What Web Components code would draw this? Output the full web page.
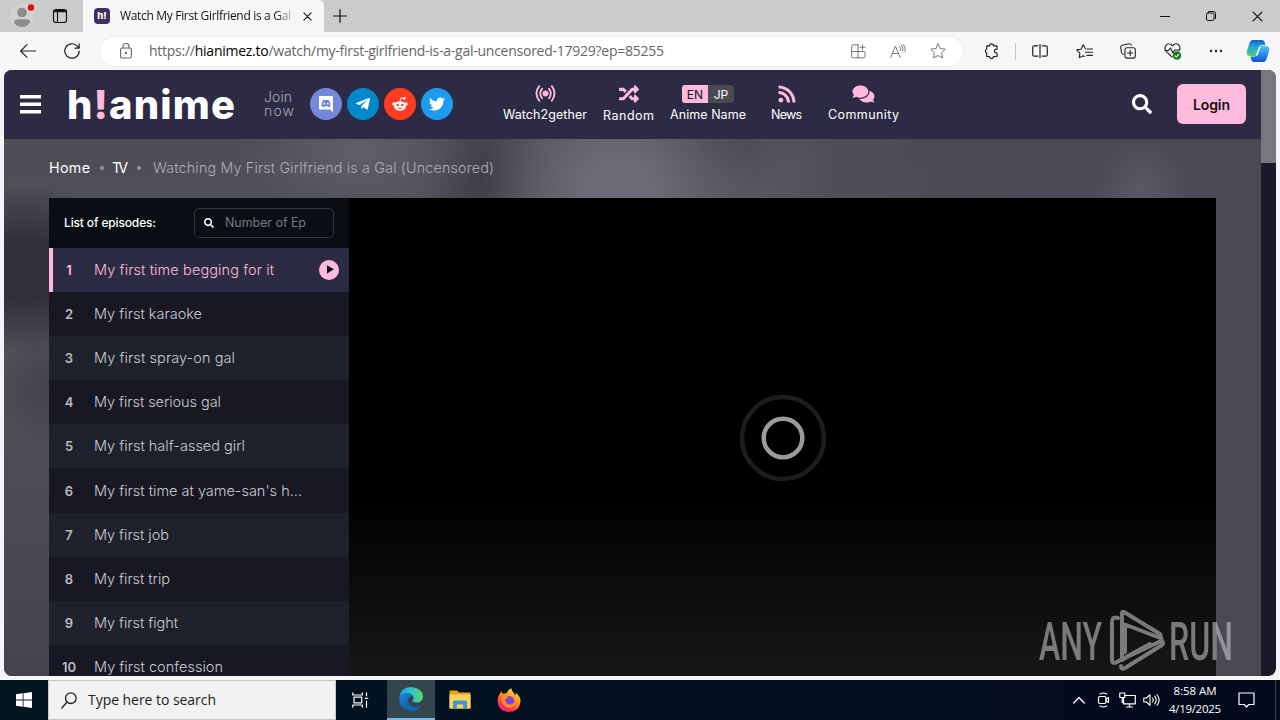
<!DOCTYPE html>
<html lang="en">
<head>
<meta charset="utf-8">
<title>Watch My First Girlfriend is a Gal</title>
<style>
html,body{margin:0;padding:0;width:1280px;height:720px;overflow:hidden;background:#f5f5f7}
</style>
</head>
<body>
<desk-top></desk-top>
<script>
const define = (name, css, html, init) => {
  const tpl = document.createElement('template');
  tpl.innerHTML = `<style>:host{display:block;box-sizing:border-box}*{box-sizing:border-box}${css}</style>${html}`;
  customElements.define(name, class extends HTMLElement {
    constructor() { super(); this.attachShadow({ mode: 'open' }).append(tpl.content.cloneNode(true)); }
    connectedCallback() { if (init) init(this, this.shadowRoot); }
  });
};

/* Text run that spreads its letters over a given width. */
define('fit-text', ':host{display:block;white-space:nowrap;flex:none}span{display:inline-block}', '<span><slot></slot></span>', (el, root) => {
  const w = parseFloat(el.getAttribute('w'));
  if (!w) return;
  el.style.width = w + 'px';
  const s = root.querySelector('span');
  s.style.letterSpacing = '0px';
  const n = el.textContent.trim().length;
  s.style.letterSpacing = ((w - s.getBoundingClientRect().width) / Math.max(1, n - 1)).toFixed(3) + 'px';
});

const L = (vb, body, sw = 1) => `<svg viewBox="${vb}" fill="none" stroke="currentColor" stroke-width="${sw}" stroke-linecap="round" stroke-linejoin="round">${body}</svg>`;
const F = (vb, d) => `<svg viewBox="${vb}" fill="currentColor"><path d="${d}"/></svg>`;
const ICONS = {
  profile: `<svg viewBox="0 0 24 28"><circle cx="12" cy="14" r="12" fill="#d3d2d1"/><circle cx="12" cy="10.5" r="4.8" fill="#8f8d8b"/><path d="M4 20.5q0-3.3 4-3.300h8q4 0 4 3.300q-3 4.500-8 4.500t-8-4.500z" fill="#8f8d8b"/><circle cx="21" cy="5.500" r="3.200" fill="#e00b0b"/></svg>`,
  tabs: L('0 0 16 16', '<rect x="1.500" y="1.500" width="13" height="13" rx="2.500"/><path d="M1.500 3.700h13M5.500 4v10" /><path d="M2 3h12" stroke-width="2"/>', 1.2),
  close: L('0 0 10 10', '<path d="M1 1l8 8M9 1l-8 8"/>', 1.2),
  plus: L('0 0 14 14', '<path d="M7 .5v13M.5 7h13"/>', 1.2),
  min: L('0 0 10 10', '<path d="M0 5.500h10"/>'),
  restore: L('0 0 10 10', '<rect x=".5" y="2" width="7.500" height="7.500" rx="1.500"/><path d="M2.500 .5h5q2 0 2 2v5"/>'),
  back: L('0 0 16 14', '<path d="M15.500 7H.7M7 .7L.7 7 7 13.300"/>', 1.1),
  reload: L('0 0 16 16', '<path d="M15.200 8a7.200 7.200 0 1 1-2.100-5.100l2.100 2.200M15.200 .8v4.300h-4.300"/>', 1.2),
  lock: L('0 0 12 16', '<rect x=".6" y="5" width="10.800" height="10" rx="1.500"/><path d="M3 5V3.500a3 3 0 0 1 6 0V5"/><circle cx="6" cy="10" r=".6" fill="currentColor"/>', 1.1),
  apps: L('0 0 15 15', '<path d="M7 .8H1.700q-1 0-1 1v11q0 1 1 1H13q1 0 1-1V8.500q0-1-1-1H.7M7 .8v13M11.500 .8v5M9 3.300h5"/>', 1),
  read: L('0 0 16 15', '<path d="M.7 13.500L5.400 2l4.700 11.500M2.500 9.500h6M9.500 2.500q1.500 1.500 1 4M11.500 1.200q2 2.500 1.300 5.800M13.500 .5q2.500 3 1.700 7"/>', 1),
  star: L('0 0 16 16', '<path d="M8 .8l2.200 4.700 5.100.7-3.700 3.600.9 5.100L8 12.500l-4.500 2.400.9-5.100L.7 6.200l5.100-.7z"/>', 1),
  puzzle: L('0 0 15 16', '<path d="M5 3.200a2 2 0 0 1 4 0h3.500v3.300h-.6a1.900 1.900 0 0 0 0 3.800h.6v3.500H9a2 2 0 0 1-4 0H2.200v-3.500a2 2 0 0 1 0-3.800V3.200z" transform="translate(.5 -.3)"/>', 1.2),
  split: L('0 0 16 14', '<path d="M5.800 1.800H2.200q-1.500 0-1.500 1.500v7.400q0 1.500 1.500 1.500h3.600M10.200 1.800h3.600q1.500 0 1.500 1.500v7.400q0 1.500-1.500 1.500h-3.600M8 0v14"/>', 1.2),
  favs: L('0 0 17 15', '<path d="M9.500 4.900L7.200.8 5 5.200.7 5.900l3.200 3.200-.7 4.700 4-2.100 1.300.7M11 5h5.500M9.500 8.200h7M11 11.400h5.500"/>', 1.1),
  collect: L('0 0 16 16', '<rect x="5" y="4.800" width="10.300" height="10.300" rx="2"/><path d="M10.200 7.300v5.300M7.500 10h5.300M3.500 11.500q-1.700-.5-2-2L.7 4.300Q.6 2.600 2.300 2.200L9 .8q1.700-.2 2.400 1.300"/>', 1.1),
  heart: `<svg viewBox="0 0 18 17" fill="none" stroke="#222" stroke-width="1.100" stroke-linejoin="round"><path d="M8.500 14.500L2 8.200Q.2 5.500 1.500 3T5 .8q2 0 3.500 2Q10 .8 12 .8q2.300 0 3.500 2.200T15 8M.5 7.500h4L6.500 5l2.500 5 1.500-3h5"/><circle cx="13" cy="12.500" r="4.200" fill="#1a7a1c" stroke="none"/><path d="M11 12.600l1.400 1.400 2.600-2.800" stroke="#fff"/></svg>`,
  dots: `<svg viewBox="0 0 14 4" fill="#222"><circle cx="2" cy="2" r="1.200"/><circle cx="7" cy="2" r="1.200"/><circle cx="12" cy="2" r="1.200"/></svg>`,
  copilot: `<svg viewBox="0 0 24 24"><defs><linearGradient id="a" x1="0" y1="0" x2="0" y2="1"><stop stop-color="#0c62c9"/><stop offset=".45" stop-color="#28a8d8"/><stop offset="1" stop-color="#4bcf6b"/></linearGradient><linearGradient id="b" x1="0" y1="0" x2="0" y2="1"><stop stop-color="#4fc7ee"/><stop offset=".5" stop-color="#2a8cec"/><stop offset="1" stop-color="#1351cf"/></linearGradient></defs><path d="M7 1h9q2 0 2.600 2l.9 3.200h-4q-2 0-2.600 2L10 17H4.500Q0 17 .8 12.500L3.500 4Q4.500 1 7 1z" fill="url(#a)"/><path d="M17 23H8q-2 0-2.600-2L4.500 17.500h4q2 0 2.600-2L14 7h5.500q4.500 0 3.700 4.500L20.500 20q-1 3-3.500 3z" fill="url(#b)"/><path d="M13.300 7.500h1.500L11.500 16.500H9.800z" fill="#e9f6ff"/></svg>`,
  bars: `<svg viewBox="0 0 21 19" fill="#fff"><path d="M0 0h21v3.500H0zM0 7.500h21v3.500H0zM0 15h21v3.500H0z"/></svg>`,
  discord: `<svg viewBox="0 0 16 16"><path d="M2 0h12q1 0 1 1v15l-3-2.500H2q-1 0-1-1V1q0-1 1-1z" fill="#fff"/><path d="M3.500 10.200q0-4 1.600-5.900Q6.300 3.600 7 4h2q.7-.4 1.900.3 1.600 1.900 1.600 5.900-1 1-2.400 1l-.6-1H6.500l-.6 1q-1.400 0-2.400-1z" fill="#7289da"/><circle cx="6.200" cy="7.700" r=".9" fill="#fff"/><circle cx="9.800" cy="7.700" r=".9" fill="#fff"/></svg>`,
  telegram: F('0 0 448 512', 'M446.700 98.600l-67.600 318.800c-5.100 22.500-18.400 28.100-37.300 17.500l-103-75.900-49.700 47.800c-5.500 5.500-10.100 10.100-20.700 10.100l7.400-104.900 190.900-172.500c8.300-7.400-1.800-11.500-12.900-4.100L117.800 284 16.200 252.200c-22.100-6.900-22.500-22.100 4.600-32.700L418.200 66.400c18.400-6.900 34.500 4.100 28.500 32.200z'),
  reddit: `<svg viewBox="0 0 16 16"><ellipse cx="8" cy="10" rx="6" ry="4.800" fill="#fff"/><circle cx="2" cy="8" r="1.700" fill="#fff"/><circle cx="14" cy="8" r="1.700" fill="#fff"/><path d="M8 5.500L8.900 1.800l3.200.7" fill="none" stroke="#fff" stroke-width=".9"/><circle cx="12.300" cy="2.400" r="1.300" fill="#fff"/><circle cx="5.700" cy="9" r="1.200" fill="#ff4019"/><circle cx="10.300" cy="9" r="1.200" fill="#ff4019"/><path d="M5.500 12q2.500 1.600 5 0" fill="none" stroke="#ff4019" stroke-width=".9"/></svg>`,
  twitter: F('0 0 512 512', 'M459.370 151.716c.325 4.548.325 9.097.325 13.645 0 138.720-105.583 298.558-298.558 298.558-59.452 0-114.680-17.219-161.137-47.106 8.447.974 16.568 1.299 25.340 1.299 49.055 0 94.213-16.568 130.274-44.832-46.132-.975-84.792-31.188-98.112-72.772 6.498.974 12.995 1.624 19.818 1.624 9.421 0 18.843-1.300 27.614-3.573-48.081-9.747-84.143-51.980-84.143-102.985v-1.299c13.969 7.797 30.214 12.670 47.431 13.319-28.264-18.843-46.781-51.005-46.781-87.391 0-19.492 5.197-37.360 14.294-52.954 51.655 63.675 129.300 105.258 216.365 109.807-1.624-7.797-2.599-15.918-2.599-24.040 0-57.828 46.782-104.934 104.934-104.934 30.213 0 57.502 12.670 76.670 33.137 23.715-4.548 46.456-13.320 66.599-25.340-7.798 24.366-24.366 44.833-46.132 57.827 21.117-2.273 41.584-8.122 60.426-16.243-14.292 20.791-32.161 39.308-52.628 54.253z'),
  cast: L('0 0 21 17', '<path d="M4.200 1.200q-5.500 7 0 14.600M16.800 1.200q5.500 7 0 14.600M7 3.800q-3.500 4.600 0 9.400M14 3.800q3.500 4.600 0 9.400" stroke-width="1.900"/><circle cx="10.500" cy="8.500" r="2.600" fill="currentColor"/>'),
  random: F('0 0 512 512', 'M504.971 359.029c9.373 9.373 9.373 24.569 0 33.941l-80 79.984c-15.010 15.010-40.971 4.490-40.971-16.971V416h-58.785a12.004 12.004 0 0 1-8.773-3.812l-70.556-75.596 53.333-57.143L352 336h32v-39.981c0-21.438 25.943-31.998 40.971-16.971l80 79.981zM12 176h84l52.781 56.551 53.333-57.143-70.556-75.596A11.999 11.999 0 0 0 122.785 96H12c-6.627 0-12 5.373-12 12v56c0 6.627 5.373 12 12 12zm372 0v39.984c0 21.460 25.961 31.980 40.971 16.971l80-79.984c9.373-9.373 9.373-24.569 0-33.941l-80-79.981C409.943 24.021 384 34.582 384 56.019V96h-58.785a12.004 12.004 0 0 0-8.773 3.812L96 336H12c-6.627 0-12 5.373-12 12v56c0 6.627 5.373 12 12 12h110.785c3.326 0 6.503-1.381 8.773-3.812L352 176h32z'),
  rss: F('0 20 448 472', 'M128.081 415.959c0 35.369-28.672 64.041-64.041 64.041S0 451.328 0 415.959s28.672-64.041 64.041-64.041 64.040 28.673 64.040 64.041zm175.660 47.250c-8.354-154.600-132.185-278.587-286.950-286.950C7.656 175.765 0 183.105 0 192.253v48.069c0 8.415 6.490 15.472 14.887 16.018 111.832 7.284 201.473 96.702 208.772 208.772.547 8.397 7.604 14.887 16.018 14.887h48.069c9.149.001 16.489-7.655 15.995-16.790zm144.249.288C439.596 229.677 251.465 40.445 16.503 32.010 7.473 31.686 0 38.981 0 48.016v48.068c0 8.625 6.835 15.645 15.453 15.999 191.179 7.839 344.627 161.316 352.465 352.465.353 8.618 7.373 15.453 15.999 15.453h48.068c9.034-.001 16.329-7.474 16.005-16.504z'),
  comments: F('0 20 576 472', 'M416 192c0-88.400-93.100-160-208-160S0 103.600 0 192c0 34.300 14.100 65.900 38 92-13.400 30.200-35.500 54.200-35.800 54.500-2.200 2.300-2.800 5.700-1.500 8.700S4.800 352 8 352c36.600 0 66.900-12.300 88.700-25 32.200 15.700 70.300 25 111.300 25 114.900 0 208-71.600 208-160zm122 220c23.900-26 38-57.700 38-92 0-66.900-53.500-124.200-129.300-148.100.9 6.600 1.300 13.300 1.300 20.100 0 105.900-107.700 192-240 192-10.800 0-21.300-.8-31.700-1.900C207.800 439.600 281.800 480 368 480c41 0 79.100-9.200 111.300-25 21.800 12.700 52.100 25 88.700 25 3.200 0 6.100-1.900 7.300-4.800 1.300-2.900.7-6.300-1.500-8.700-.3-.3-22.400-24.200-35.800-54.500z'),
  search: F('0 0 512 512', 'M505 442.700L405.300 343c-4.500-4.500-10.600-7-17-7H372c27.600-35.300 44-79.700 44-128C416 93.100 322.900 0 208 0S0 93.100 0 208s93.100 208 208 208c48.300 0 92.700-16.400 128-44v16.300c0 6.400 2.500 12.500 7 17l99.700 99.700c9.400 9.400 24.600 9.400 33.900 0l28.300-28.300c9.400-9.400 9.400-24.600.1-34zM208 336c-70.700 0-128-57.200-128-128 0-70.700 57.200-128 128-128 70.700 0 128 57.200 128 128 0 70.700-57.200 128-128 128z'),
  play: `<svg viewBox="0 0 20 20"><circle cx="10" cy="10" r="10" fill="#ffbade"/><path d="M8 5.300l7 3.900-7 4.200z" fill="#111"/></svg>`,
  win: `<svg viewBox="0 0 16 16" fill="#fff"><path d="M0 2.200l6.700-.9v6.300H0zM7.500 1.200L16 0v7.600H7.500zM0 8.400h6.700v6.300L0 13.800zM7.500 8.400H16V16l-8.500-1.200z"/></svg>`,
  glass: L('0 0 16 17', '<circle cx="9.800" cy="6.200" r="5.300"/><path d="M6 10L.8 16"/>', 1.3),
  taskview: L('0 0 17 16', '<path d="M.8 .8v2.200h9.500V.8M2 5.200h7.800v5.600H2zM.8 15.200V13h9.500v2.200M14.500 .8v3M14.500 9v6.200M13.200 6.300h2.600"/>', 1.2),
  edge: `<svg viewBox="0 0 24 24"><defs><linearGradient id="e" x1="0" y1=".3" x2="1" y2=".2"><stop stop-color="#1f9fe8"/><stop offset=".5" stop-color="#2cc3cf"/><stop offset="1" stop-color="#62dc4c"/></linearGradient><linearGradient id="f" x1="0" y1="0" x2=".6" y2="1"><stop stop-color="#1a86d8"/><stop offset="1" stop-color="#0c59a4"/></linearGradient></defs><path d="M.3 11Q1.500 0 12 0q11.500 1 12 9.500-.3 6-6.500 6-4.500 0-4-2.200 1.500-1.300 1-3.300Q12.500 6 8 6.200 2.500 6.500 .3 11z" fill="url(#e)"/><path d="M.2 12Q1 7 7.500 6.300q5-.2 6.700 3.200-5-.5-5.400 4 0 5.500 6.700 7 4 .5 6.700-2Q19 24 12 24 1 23 .2 12z" fill="url(#f)"/><path d="M8.800 13.500q0 5.500 6.700 7 4 .5 6.700-2l-2.500 3.200Q16 24.200 12 24q-5-3-5-8 .2-4 3.500-6-1.700 1.500-1.700 3.500z" fill="#1267b8"/></svg>`,
  folder: `<svg viewBox="0 0 22 20"><path d="M.5 1.500q0-1 1-1H8l2 2h10.500q1 0 1 1V18H.5z" fill="#e8a21b"/><path d="M.5 4.500h21V18q0 .8-.8.8H1.300q-.8 0-.8-.8z" fill="#fbd35f"/><path d="M4 19v-7q0-1.500 1.500-1.500h11q1.500 0 1.500 1.500v7h-3.800v-4.500H7.800V19z" fill="#3f93cf"/></svg>`,
  firefox: `<svg viewBox="0 0 24 24"><defs><linearGradient id="g" x1=".8" y1="0" x2=".25" y2="1"><stop stop-color="#fff04a"/><stop offset=".4" stop-color="#ff9a1e"/><stop offset=".75" stop-color="#ff3b4a"/><stop offset="1" stop-color="#e31587"/></linearGradient></defs><path d="M3 5.500q.8-1.500 1.700-2.500 0 2 1 2.800Q8 5 9.500 5.500 11 1.500 14.500 0q-.5 2 1.500 4 1.500 1.500 2.700 3.500Q19 6 18.500 4.500 23.800 8.500 23.500 13.500 22.500 24 12 24 1 23.500 .5 12.500 .5 8.500 3 5.500z" fill="url(#g)"/><circle cx="12.200" cy="13.200" r="5.200" fill="#8045d8"/><path d="M4 8.500q4-2.500 7.500 1-3.500 1-3.500 3.500 2 4 5.500 3.500 4-.5 4-5Q20 19.500 12.500 20 4 19 4 8.500z" fill="#ff8a22"/></svg>`,
  up: L('0 0 12 8', '<path d="M.7 7L6 1.500 11.300 7"/>', 1.3),
  meet: L('0 0 14 16', '<rect x="1.500" y="4.500" width="7.500" height="7" rx="1.500"/><path d="M9 7.300l2.500-1.800v5L9 8.700M3 2q3-2 6.500 0M3 14q3 2 6.500 0"/>', 1.2),
  net: L('0 0 17 16', '<path d="M4.500 3.500h11.800v8.300H4.500zM10.500 12v3M7.500 15h6"/><rect x=".8" y="1" width="5" height="4.500" fill="#020b1d"/><path d="M3.300 5.500v5"/>', 1.2),
  sound: L('0 0 17 14', '<path d="M.8 5v4h2.700L7 12.300V1.700L3.500 5zM9.500 5q1.500 2 0 4M11.700 3.200q3 3.800 0 7.600M13.900 1.500q4.500 5.500 0 11"/>', 1.1),
  note: L('0 0 17 16', '<path d="M1 1h15v11.500h-5.200L8.500 15l-2.300-2.500H1z"/>', 1.2),
};
define('ui-icon', ':host{flex:none;display:block}svg{display:block;width:100%;height:100%}', '', (el, root) => {
  el.style.width = el.getAttribute('w') + 'px';
  el.style.height = el.getAttribute('h') + 'px';
  if (!root.querySelector('svg')) root.append(document.createRange().createContextualFragment(ICONS[el.getAttribute('name')]));
});

/* ---------- browser chrome ---------- */
define('tab-strip', `
:host{height:32px;background:#cbcbcb;display:flex;font:12px/32px "Open Sans",sans-serif;color:#111}
.left{width:83px;display:flex;align-items:center;padding-left:10px}
.tab{width:241px;background:#f7f7f7;border-radius:0 5px 0 0;display:flex;align-items:center;padding-left:11px}
.fav{width:16px;height:16px;border-radius:4px;background:#3c3160;color:#fff;font:800 9.500px/15px Inter,sans-serif;text-align:center;margin-right:10px}
.title{width:173px;overflow:hidden;-webkit-mask:linear-gradient(90deg,#000 155px,rgba(0,0,0,.15) 173px)}
.ctl{margin-left:auto;display:flex;align-items:center;gap:36px;padding-right:17px}`,
`<div class="left"><ui-icon name="profile" w="24" h="28"></ui-icon><ui-icon name="tabs" w="16" h="16" style="margin-left:18px"></ui-icon></div>
<div class="tab"><div class="fav">h!</div><div class="title"><fit-text w="171">Watch My First Girlfriend is a Gal</fit-text></div><ui-icon name="close" w="9" h="9" style="margin-left:10px"></ui-icon></div>
<ui-icon name="plus" w="14" h="14" style="margin:9px 0 0 9px"></ui-icon>
<div class="ctl"><ui-icon name="min" w="10" h="10"></ui-icon><ui-icon name="restore" w="10" h="10"></ui-icon><ui-icon name="close" w="11" h="11"></ui-icon></div>`);

define('tool-bar', `
:host{height:38px;background:#f7f7f7;display:flex;align-items:center;color:#222;font:14px/30px "Open Sans",sans-serif;padding-left:20px}
.pill{width:865px;height:31px;border-radius:16px;background:#fff;display:flex;align-items:center;margin-left:19px;padding-left:20px;color:#666;border:1px solid #f0f0f0}
b{font-weight:400;color:#000}
.acts{display:flex;gap:24px;margin-left:auto;padding-right:17px;align-items:center;color:#777}
.ext{display:flex;align-items:center}
.sep{width:1px;height:17px;background:#c4c4c4;margin:0 16px}`,
`<ui-icon name="back" w="16" h="14"></ui-icon><ui-icon name="reload" w="16" h="16" style="margin-left:28px"></ui-icon>
<div class="pill"><ui-icon name="lock" w="12" h="16"></ui-icon><fit-text w="515" style="margin-left:17px">https://<b>hianimez.to</b>/watch/my-first-girlfriend-is-a-gal-uncensored-17929?ep=85255</fit-text>
<div class="acts"><ui-icon name="apps" w="15" h="15"></ui-icon><ui-icon name="read" w="16" h="15"></ui-icon><ui-icon name="star" w="16" h="16"></ui-icon></div></div>
<div class="ext"><ui-icon name="puzzle" w="15" h="16" style="margin-left:20px"></ui-icon><div class="sep"></div><ui-icon name="split" w="16" h="14"></ui-icon>
<ui-icon name="favs" w="17" h="15" style="margin-left:28px"></ui-icon><ui-icon name="collect" w="16" h="16" style="margin-left:27px"></ui-icon><ui-icon name="heart" w="18" h="17" style="margin-left:28px"></ui-icon><ui-icon name="dots" w="14" h="4" style="margin-left:27px"></ui-icon><ui-icon name="copilot" w="24" h="24" style="margin-left:23px"></ui-icon></div>`);

/* ---------- site header ---------- */
define('social-link', ':host{width:32px;height:32px;border-radius:50%;display:flex;align-items:center;justify-content:center;color:#fff;flex:none}', '<slot></slot>');
define('nav-item', `:host{display:flex;flex-direction:column;align-items:center;font:12.500px/18px Inter,sans-serif;color:#fff;height:40px;flex:none}
.top{height:20px;display:flex;align-items:center;color:#ffbade;margin-bottom:3px}`,
'<div class="top"><slot name="icon"></slot></div><slot></slot>');
define('lang-switch', `:host{display:flex;width:52px;height:18px;border-radius:3px;overflow:hidden;font:12px/19px Inter,sans-serif;text-align:center}
span{flex:1;background:#4a4a51;color:#fff}.on{background:#ffbade;color:#111}`, '<span class="on">EN</span><span>JP</span>');
define('site-header', `
:host{height:69px;background:#2d2b44;display:flex;align-items:center;padding:0 15px 1px 16px}
.logo{display:flex;font:800 40px/40px Inter,sans-serif;color:#fff;margin-left:26px;width:169px;padding-top:2px}
.logo i{font-style:normal;color:#ffbade}
.join{font:300 14px/14px Inter,sans-serif;color:#aaa9b5;margin-left:28px;width:46px}
.soc{display:flex;gap:5px}
.login{width:69px;height:40px;border-radius:6px;background:#ffbade;color:#111;font:600 14px/42px Inter,sans-serif;display:flex;justify-content:center}`,
`<ui-icon name="bars" w="21" h="19"></ui-icon>
<div class="logo"><fit-text w="168">h<i>!</i>anime</fit-text></div>
<div class="join"><fit-text w="28">Join</fit-text><fit-text w="30">now</fit-text></div>
<div class="soc"><social-link style="background:#7289da"><ui-icon name="discord" w="16" h="16"></ui-icon></social-link><social-link style="background:#08c"><ui-icon name="telegram" w="14" h="16"></ui-icon></social-link><social-link style="background:#ff3c1f"><ui-icon name="reddit" w="16" h="16"></ui-icon></social-link><social-link style="background:#1d9bf0"><ui-icon name="twitter" w="16" h="16"></ui-icon></social-link></div>
<nav-item style="margin-left:50px"><ui-icon slot="icon" name="cast" w="21" h="17"></ui-icon><fit-text w="84">Watch2gether</fit-text></nav-item>
<nav-item style="margin-left:16px"><ui-icon slot="icon" name="random" w="20" h="20"></ui-icon><fit-text w="51">Random</fit-text></nav-item>
<nav-item style="margin-left:16px"><lang-switch slot="icon"></lang-switch><fit-text w="76">Anime Name</fit-text></nav-item>
<nav-item style="margin-left:25px"><ui-icon slot="icon" name="rss" w="18" h="18"></ui-icon><fit-text w="31">News</fit-text></nav-item>
<nav-item style="margin-left:26px"><ui-icon slot="icon" name="comments" w="23" h="18"></ui-icon><fit-text w="71">Community</fit-text></nav-item>
<ui-icon name="search" w="20" h="20" style="color:#fff;margin-left:auto"></ui-icon>
<div class="login" style="margin-left:25px"><fit-text w="37">Login</fit-text></div>`);

define('bread-crumbs', `
:host{height:58px;margin-bottom:1px;padding:0 0 0 45px;display:flex;align-items:center;font:300 14.300px/20px Inter,sans-serif;color:#b0afb7}
b{font-weight:400;color:#fff}i{width:4px;height:4px;border-radius:50%;background:#96959d}`,
`<b><fit-text w="41">Home</fit-text></b><i style="margin:0 8px 0 10px"></i><b><fit-text w="16">TV</fit-text></b><i style="margin:0 12px 0 9px"></i><fit-text w="341">Watching My First Girlfriend is a Gal (Uncensored)</fit-text>`);

/* ---------- episodes ---------- */
define('episode-row', `
:host{height:44.100px;display:flex;align-items:center;font:300 14.500px/20px Inter,sans-serif;color:#cccbd3;background:#171823;padding-right:10px;flex:none}
:host(:nth-child(odd)){background:#1e202c}
:host([active]){background:#2c2b44;color:#ffbade;border-left:4px solid #ffbade}
.n{width:40px;text-align:center;font-weight:600;font-size:13px;color:#bbbac3}
:host([active]) .n{width:32px;color:#ffbade}
.t{flex:1;padding-left:5px}:host([active]) .t{padding-left:9px}`,
'<div class="n"></div><div class="t"><slot></slot></div>', (el, root) => {
  root.querySelector('.n').textContent = el.getAttribute('n');
  if (el.hasAttribute('active') && !root.querySelector('ui-icon')) {
    const i = document.createElement('ui-icon');
    for (const [k, v] of [['name', 'play'], ['w', '20'], ['h', '20']]) i.setAttribute(k, v);
    root.append(i);
  }
});
define('episode-list', `
:host{width:300px;flex:none;background:#171823;overflow:hidden;display:flex;flex-direction:column}
.head{height:50px;flex:none;background:#0b0d15;display:flex;align-items:center;justify-content:space-between;padding:0 15px;font:500 12px/18px Inter,sans-serif;color:#fff}
.box{width:140px;height:30px;border:1px solid #33353d;border-radius:5px;display:flex;align-items:center;font-weight:400;font-size:12.500px;color:#75767e;padding-left:9px}
.box ui-icon{color:#fff;margin-right:11px}`,
`<div class="head"><fit-text w="92">List of episodes:</fit-text><div class="box"><ui-icon name="search" w="10" h="10"></ui-icon><fit-text w="81">Number of Ep</fit-text></div></div>
<div class="rows">${[['My first time begging for it', 180], ['My first karaoke', 108], ['My first spray-on gal', 141], ['My first serious gal', 127], ['My first half-assed girl', 151], ["My first time at yame-san's h...", 208], ['My first job', 75], ['My first trip', 76], ['My first fight', 84], ['My first confession', 129]].map(([t, w], i) => `<episode-row n="${i + 1}"${i ? '' : ' active'}><fit-text w="${w}">${t}</fit-text></episode-row>`).join('')}</div>`);

define('video-player', `
:host{flex:1;background:linear-gradient(#000 0,#000 62%,#0b0b0b 80%,#171717 100%);display:grid;grid-template-rows:480px;place-items:center}
svg{width:88px;height:88px;display:block}`,
`<svg viewBox="0 0 88 88" fill="none"><circle cx="44" cy="44" r="41" stroke="#1d1d1d" stroke-width="4.500"/><circle cx="44" cy="44" r="19.300" stroke="#9b9b9b" stroke-width="4.500"/></svg>`);

define('any-run', `:host{position:absolute;left:1033px;top:539px;width:206px;height:64px;opacity:.55}svg{display:block;width:206px;height:64px}text{font:500 53px Roboto,sans-serif;fill:#d0d0d6}`,
`<svg viewBox="0 0 206 64" fill="none" stroke="#d0d0d6" stroke-width="4" stroke-linejoin="round" stroke-linecap="round"><g stroke="none"><text x="2" y="50.500" textLength="63" lengthAdjust="spacingAndGlyphs">ANY</text><text x="132" y="50.500" textLength="64" lengthAdjust="spacingAndGlyphs">RUN</text></g>
<path d="M85 51V4q0-2 2-1L123 25q2 2-1 3.500L88 15.500V43M81 9q-6-2-6 4v38q0 4 4 2.500L113 35M85 51l4-2.500L124 32q2-3-2-4.500M84 57q0 4 4 2l37-23q2-2 0-4"/></svg>`);

define('site-page', `
:host{margin:0 4px;height:606px;border-radius:8px;overflow:hidden;display:flex;background:#1b1829;position:relative}
.view{width:1257px;display:flex;flex-direction:column;background:
radial-gradient(ellipse 140px 130px at 615px 120px,#6c6a74 25%,transparent),
radial-gradient(ellipse 120px 80px at 355px 80px,#605e68,transparent),
radial-gradient(ellipse 70px 90px at 484px 110px,#403e48 10%,transparent),
radial-gradient(ellipse 90px 60px at 705px 76px,#47454e,transparent),
radial-gradient(ellipse 80px 100px at 752px 100px,#5a5862,transparent),
radial-gradient(ellipse 50px 60px at 1138px 125px,#5b5963,transparent),
radial-gradient(ellipse 100px 85px at 20px 200px,#302f3a 35%,transparent),
radial-gradient(ellipse 60px 60px at 45px 318px,#43414b,transparent),
linear-gradient(90deg,transparent 65%,#4b4953 80%),
linear-gradient(#4d4b55,#53515a 45%,#45434e)}
.watch{flex:1;min-height:0;display:flex;margin:0 45px}
.bar{flex:1}.bar div{height:93px;background:#797680}`,
`<div class="view"><site-header></site-header><bread-crumbs></bread-crumbs><div class="watch"><episode-list></episode-list><video-player></video-player></div></div><div class="bar"><div></div></div><any-run></any-run>`);

/* ---------- task bar ---------- */
define('task-bar', `
:host{height:40px;display:flex;align-items:center;background:linear-gradient(90deg,#01161f,#020f20 50%,#020a1c);color:#fff;font:11.500px/18px "Open Sans",sans-serif}
.start{width:48px;display:flex;justify-content:center}
.find{width:288px;height:40px;background:#f2f2f2;border:1px solid #c8c8c8;display:flex;align-items:center;padding-left:12px;color:#222;font-size:14px}
.app{width:48px;height:40px;display:flex;align-items:center;justify-content:center}
.app.on{background:#33464e;border-bottom:2px solid #76b9ed}
.tray{margin-left:auto;display:flex;align-items:center}
.clock{display:flex;flex-direction:column;align-items:center;width:54px;margin-left:8px}
.peek{width:5px;height:40px;border-left:1px solid #3a4657;margin-left:20px}`,
`<div class="start"><ui-icon name="win" w="16" h="16"></ui-icon></div>
<div class="find"><ui-icon name="glass" w="16" h="17"></ui-icon><fit-text w="128" style="margin-left:11px">Type here to search</fit-text></div>
<div class="app" style="margin-right:3px"><ui-icon name="taskview" w="17" h="16"></ui-icon></div>
<div class="app on"><ui-icon name="edge" w="24" h="24"></ui-icon></div><div class="app" style="margin-left:1px"><ui-icon name="folder" w="22" h="20"></ui-icon></div><div class="app" style="margin-left:1px"><ui-icon name="firefox" w="24" h="24"></ui-icon></div>
<div class="tray"><ui-icon name="up" w="12" h="8"></ui-icon><ui-icon name="meet" w="14" h="16" style="margin-left:12px"></ui-icon><ui-icon name="net" w="17" h="16" style="margin-left:8px"></ui-icon><ui-icon name="sound" w="17" h="14" style="margin-left:7px"></ui-icon>
<div class="clock"><fit-text w="43">8:58 AM</fit-text><fit-text w="52">4/19/2025</fit-text></div><ui-icon name="note" w="17" h="16" style="margin-left:16px"></ui-icon><div class="peek"></div></div>`);

define('desk-top', ':host{width:1280px;height:720px;overflow:hidden;display:flex;flex-direction:column}site-page{flex:none;margin-bottom:4px}',
'<tab-strip></tab-strip><tool-bar></tool-bar><site-page></site-page><task-bar></task-bar>');
</script>
</body>
</html>
